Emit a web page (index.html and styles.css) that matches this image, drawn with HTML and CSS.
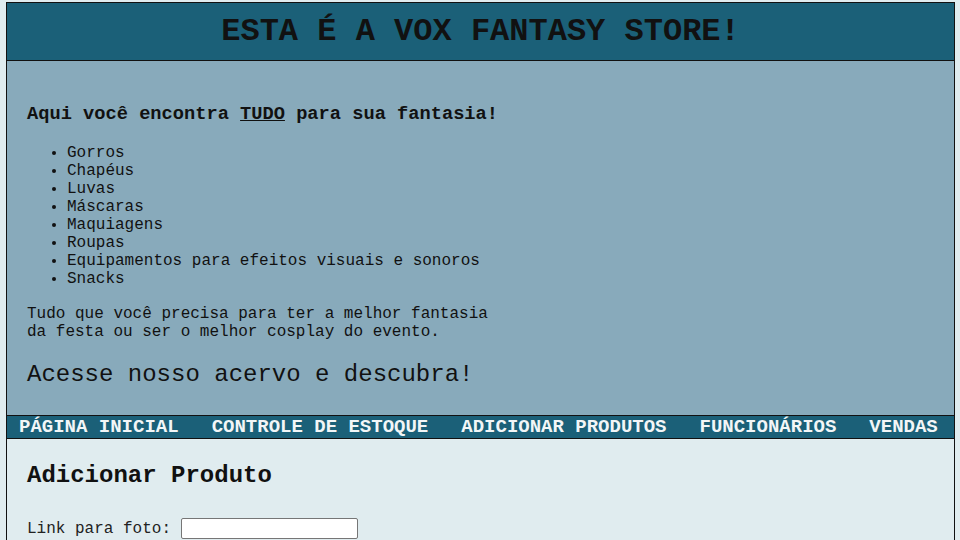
FILE: index.html
```html
<!DOCTYPE html>
<html lang="pt-BR">
<head>
<meta charset="utf-8">
<title>Vox Fantasy Store</title>
<link rel="stylesheet" href="styles.css">
</head>
<body>
<div class="page">
  <header class="top">
    <h1 class="title">ESTA É A VOX FANTASY STORE!</h1>
  </header>
  <section class="intro">
    <h3 class="lead">Aqui você encontra <u>TUDO</u> para sua fantasia!</h3>
    <ul class="items">
      <li>Gorros</li>
      <li>Chapéus</li>
      <li>Luvas</li>
      <li>Máscaras</li>
      <li>Maquiagens</li>
      <li>Roupas</li>
      <li>Equipamentos para efeitos visuais e sonoros</li>
      <li>Snacks</li>
    </ul>
    <p class="desc">Tudo que você precisa para ter a melhor fantasia<br>da festa ou ser o melhor cosplay do evento.</p>
    <h2 class="cta">Acesse nosso acervo e descubra!</h2>
  </section>
  <nav class="menu">
    <a href="#">PÁGINA INICIAL</a>
    <a href="#">CONTROLE DE ESTOQUE</a>
    <a href="#">ADICIONAR PRODUTOS</a>
    <a href="#">FUNCIONÁRIOS</a>
    <a href="#">VENDAS</a>
  </nav>
  <main class="content">
    <h2 class="form-title">Adicionar Produto</h2>
    <div class="row">
      <label class="lbl" for="foto">Link para foto:</label>
      <input class="field" id="foto" type="text">
    </div>
  </main>
</div>
</body>
</html>
```
FILE: styles.css
```css
html, body {
  margin: 0;
  padding: 0;
}
body {
  background: #e0ecef;
  font-family: "Courier New", "Liberation Mono", monospace;
  color: #111;
}
.page {
  margin: 2px 5px 0 6px;
  border: 1px solid #111;
  border-bottom: none;
  min-height: calc(100vh - 2px);
  box-sizing: border-box;
  display: flex;
  flex-direction: column;
  background: #e0ecef;
}
.top {
  background: #1b6078;
  border-bottom: 1px solid #111;
}
.title {
  margin: 0;
  font-size: 32px;
  line-height: 37px;
  padding: 10px 0;
  text-align: center;
  font-weight: bold;
  color: #111;
}
.intro {
  background: #88aabb;
  padding: 43px 20px 27px;
}
.lead {
  margin: 0;
  font-size: 18.7px;
  line-height: 21px;
  font-weight: bold;
}
.items {
  margin: 19px 0 17px;
  padding-left: 40px;
  font-size: 16px;
  line-height: 18px;
}
.desc {
  margin: 0;
  font-size: 16px;
  line-height: 18px;
}
.cta {
  margin: 20px 0 0;
  font-size: 24px;
  line-height: 27px;
  font-weight: normal;
}
.menu {
  background: #1b6078;
  border-top: 1px solid #111;
  border-bottom: 1px solid #111;
  display: flex;
  gap: 33px;
  padding: 0 12px;
  height: 22px;
  align-items: center;
}
.menu a {
  color: #f2f6f7;
  text-decoration: none;
  font-weight: bold;
  font-size: 19px;
  line-height: 22px;
  white-space: nowrap;
}
.content {
  flex: 1;
  background: #e0ecef;
  padding: 23px 20px 0;
}
.form-title {
  margin: 0;
  font-size: 24px;
  line-height: 27px;
  font-weight: bold;
}
.row {
  margin-top: 29px;
  display: flex;
  align-items: center;
  gap: 10px;
  height: 21px;
}
.lbl {
  font-size: 16px;
  color: #222;
}
.field {
  width: 177px;
  height: 21px;
  box-sizing: border-box;
  border: 1px solid #767676;
  border-radius: 2px;
  background: #fff;
  margin: 0;
  padding: 1px 2px;
}
```
